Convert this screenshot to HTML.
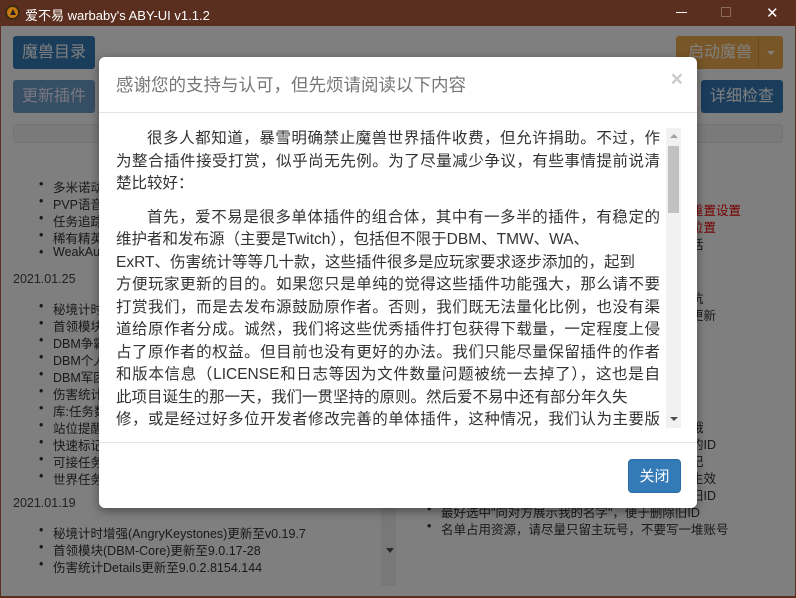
<!DOCTYPE html>
<html><head><meta charset="utf-8"><style>
*{margin:0;padding:0;box-sizing:border-box}
body{width:796px;height:598px;overflow:hidden;background:#5a2f1f;font-family:"Liberation Sans","Noto Sans CJK SC",sans-serif;position:relative}
.tb{position:absolute;left:0;top:0;width:796px;height:26px;background:#5a2f1f;color:#fff;font-size:13px}
.tb .t{position:absolute;left:25px;top:5px}
.ic{position:absolute;left:5px;top:5px;width:15px;height:15px;border-radius:50%;background:#c87a10;border:2px solid #3a2a10}
.ic:after{content:"";position:absolute;left:3px;top:2px;border-left:3px solid transparent;border-right:3px solid transparent;border-bottom:6px solid #222}
.win{position:absolute;left:1px;top:26px;width:794px;height:570px;background:#fff;overflow:hidden}
.ov{position:absolute;left:1px;top:26px;width:794px;height:570px;background:rgba(0,0,0,0.5)}
.abs{position:absolute}
.btn{position:absolute;color:#fff;font-size:16px;text-align:center;border-radius:3px;line-height:33px}
.li{position:absolute;font-size:12.5px;color:#333;white-space:nowrap}
.li:before{content:"•";position:absolute;left:-14px}
.red{color:#e00}
.modal{position:absolute;left:99px;top:57px;width:598px;height:451px;background:#fff;border-radius:6px;box-shadow:0 3px 10px rgba(0,0,0,.4)}
.mh{position:absolute;left:17px;top:15px;font-size:17.5px;color:#777}
.x{position:absolute;right:14px;top:11px;font-size:21px;color:#ccc;font-weight:bold}
.hr{position:absolute;left:0;width:598px;height:1px;background:#e5e5e5}
.txt{position:absolute;left:17px;top:71px;width:544px;height:300px;overflow:hidden;font-size:15.5px;color:#333;line-height:22.5px}
.txt div{text-align:justify;text-align-last:justify;white-space:nowrap}
.txt div.l{text-align-last:left}
.txt .in{text-indent:31px}
.txt .pg{margin-top:11px}
.sb{position:absolute;left:567px;top:71px;width:15px;height:300px;background:#f1f1f1}
.th{position:absolute;left:2px;top:18px;width:11px;height:67px;background:#c1c1c1}
.close{position:absolute;left:529px;top:402px;width:53px;height:34px;background:#337ab7;border-radius:4px;color:#fff;font-size:15px;text-align:center;line-height:34px;border:1px solid #2e6da4}
</style></head><body>
<div class="tb"><div class="ic"></div><div class="t">爱不易 warbaby's ABY-UI v1.1.2</div>
<div class="abs" style="left:676px;top:12px;width:11px;height:1px;background:#fff"></div>
<div class="abs" style="left:721px;top:7px;width:10px;height:10px;border:1px solid #8a6a5a"></div>
<div class="abs" style="left:766px;top:4px;font-size:15px;color:#fff">✕</div>
</div>
<div class="win">
<div class="btn" style="left:12px;top:10px;width:82px;background:#337ab7">魔兽目录</div>
<div class="btn" style="left:12px;top:54px;width:82px;background:#6f9fcb;color:#eef">更新插件</div>
<div class="btn" style="left:675px;top:10px;width:107px;background:#f0ad4e;text-align:left;padding-left:12px">启动魔兽<span style="position:absolute;right:0;top:0;width:25px;height:33px;border-left:1px solid #d9963a"></span><span style="position:absolute;right:8px;top:15px;border-left:4px solid transparent;border-right:4px solid transparent;border-top:4px solid #fff"></span></div>
<div class="btn" style="left:700px;top:54px;width:82px;background:#337ab7">详细检查</div>
<div class="abs" style="left:12px;top:98px;width:770px;height:19px;background:#f5f5f5;border-radius:3px;border:1px solid #e8e8e8"></div>
<div class="abs" style="left:380px;top:140px;width:15px;height:420px;background:#f1f1f1"></div>
<div class="abs" style="left:385px;top:522px;border-left:4px solid transparent;border-right:4px solid transparent;border-top:5px solid #555"></div>
<div class="li" style="left:52px;top:151px">多米诺动画</div>
<div class="li" style="left:52px;top:168px">PVP语音</div>
<div class="li" style="left:52px;top:185px">任务追踪</div>
<div class="li" style="left:52px;top:202px">稀有精英</div>
<div class="li" style="left:52px;top:219px">WeakAuras</div>
<div class="abs" style="left:12px;top:246px;font-size:12.5px;color:#444">2021.01.25</div>
<div class="li" style="left:52px;top:273px">秘境计时</div>
<div class="li" style="left:52px;top:290px">首领模块</div>
<div class="li" style="left:52px;top:307px">DBM争霸</div>
<div class="li" style="left:52px;top:324px">DBM个人</div>
<div class="li" style="left:52px;top:341px">DBM军团</div>
<div class="li" style="left:52px;top:358px">伤害统计</div>
<div class="li" style="left:52px;top:375px">库:任务数据</div>
<div class="li" style="left:52px;top:392px">站位提醒</div>
<div class="li" style="left:52px;top:409px">快速标记</div>
<div class="li" style="left:52px;top:426px">可接任务</div>
<div class="li" style="left:52px;top:443px">世界任务</div>
<div class="abs" style="left:12px;top:470px;font-size:12.5px;color:#444">2021.01.19</div>
<div class="li" style="left:52px;top:497px">秘境计时增强(AngryKeystones)更新至v0.19.7</div>
<div class="li" style="left:52px;top:514px">首领模块(DBM-Core)更新至9.0.17-28</div>
<div class="li" style="left:52px;top:531px">伤害统计Details更新至9.0.2.8154.144</div>
<div class="li red" style="left:640px;top:174px">在设置里重置设置</div>
<div class="li red" style="left:640px;top:191px">可以重置位置</div>
<div class="li" style="left:640px;top:208px">可以悄悄话</div>
<div class="li" style="left:640px;top:262px">欢迎来填坑</div>
<div class="li" style="left:640px;top:279px">自动检查更新</div>
<div class="li" style="left:640px;top:296px">魔兽目录</div>
<div class="li" style="left:640px;top:391px">使用计器哦</div>
<div class="li" style="left:640px;top:408px">最近一次的ID</div>
<div class="li" style="left:640px;top:425px">使用者标记</div>
<div class="li" style="left:640px;top:442px">重载时会生效</div>
<div class="li" style="left:640px;top:459px">便于说明旧ID</div>
<div class="li" style="left:440px;top:476px">最好选中"向对方展示我的名字"，便于删除旧ID</div>
<div class="li" style="left:440px;top:493px">名单占用资源，请尽量只留主玩号，不要写一堆账号</div>
</div>
<div class="ov"></div>
<div class="modal">
<div class="mh">感谢您的支持与认可，但先烦请阅读以下内容</div>
<div class="x">×</div>
<div class="hr" style="top:55px"></div>
<div class="txt">
<div class="in">很多人都知道，暴雪明确禁止魔兽世界插件收费，但允许捐助。不过，作</div>
<div>为整合插件接受打赏，似乎尚无先例。为了尽量减少争议，有些事情提前说清</div>
<div class="l">楚比较好：</div>
<div class="in pg">首先，爱不易是很多单体插件的组合体，其中有一多半的插件，有稳定的</div>
<div class="l">维护者和发布源（主要是Twitch），包括但不限于DBM、TMW、WA、</div>
<div class="l">ExRT、伤害统计等等几十款，这些插件很多是应玩家要求逐步添加的，起到</div>
<div>方便玩家更新的目的。如果您只是单纯的觉得这些插件功能强大，那么请不要</div>
<div>打赏我们，而是去发布源鼓励原作者。否则，我们既无法量化比例，也没有渠</div>
<div>道给原作者分成。诚然，我们将这些优秀插件打包获得下载量，一定程度上侵</div>
<div>占了原作者的权益。但目前也没有更好的办法。我们只能尽量保留插件的作者</div>
<div>和版本信息（LICENSE和日志等因为文件数量问题被统一去掉了），这也是自</div>
<div class="l">此项目诞生的那一天，我们一贯坚持的原则。然后爱不易中还有部分年久失</div>
<div>修，或是经过好多位开发者修改完善的单体插件，这种情况，我们认为主要版</div>
<div>权归属于爱不易，我们会在插件中标注原作者，如果原作者有异议可联系我们</div>
</div>
<div class="sb"><div class="th"></div>
<div class="abs" style="left:4px;top:6px;border-left:4px solid transparent;border-right:4px solid transparent;border-bottom:4px solid #a0a0a0"></div>
<div class="abs" style="left:4px;top:289px;border-left:4px solid transparent;border-right:4px solid transparent;border-top:4px solid #505050"></div>
</div>
<div class="hr" style="top:385px"></div>
<div class="close">关闭</div>
</div>
</body></html>
